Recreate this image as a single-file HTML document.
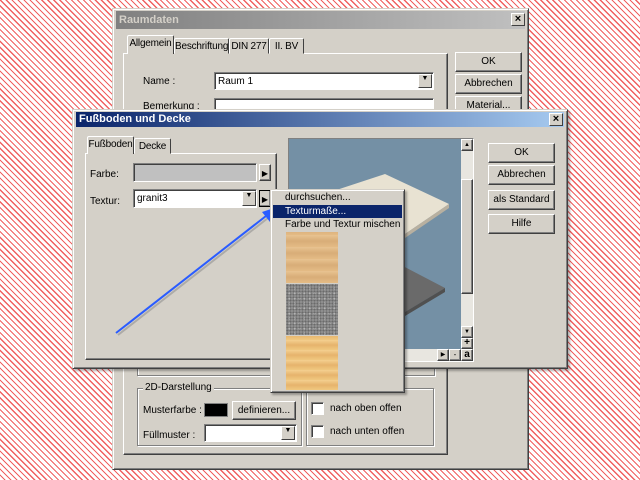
<!DOCTYPE html>
<html><head><meta charset="utf-8"><style>
*{box-sizing:border-box;margin:0;padding:0}
body{width:640px;height:480px;overflow:hidden;position:relative;font-family:"Liberation Sans",sans-serif;font-size:10px;color:#000;white-space:nowrap;
background:repeating-linear-gradient(45deg,#fff 0,#fff 3px,#f06060 3px,#f06060 4.2px);}
.abs{position:absolute}
.win{position:absolute;background:#d4d0c8;border:1px solid;border-color:#d4d0c8 #404040 #404040 #d4d0c8;box-shadow:inset 1px 1px #fff,inset -1px -1px #808080}
.btn{position:absolute;background:#d4d0c8;border:1px solid;border-color:#fff #404040 #404040 #fff;box-shadow:inset -1px -1px #808080;text-align:center;line-height:17px}
.sunk{position:absolute;background:#fff;border:1px solid;border-color:#808080 #fff #fff #808080;box-shadow:inset 1px 1px #404040}
.panel{position:absolute;border:1px solid;border-color:#fff #404040 #404040 #fff;box-shadow:inset -1px -1px #808080}
.tab{position:absolute;background:#d4d0c8;border:1px solid;border-color:#fff #404040 transparent #fff;border-radius:2px 2px 0 0;text-align:center;line-height:15px;letter-spacing:-0.2px}
.grp{position:absolute;border:1px solid #808080;box-shadow:1px 1px #fff,inset 1px 1px #fff}
.x{position:absolute;width:14px;height:13px;background:#d4d0c8;border:1px solid;border-color:#fff #404040 #404040 #fff;font-size:11px;line-height:10px;text-align:center;font-weight:bold}
.dd{position:absolute;width:14px;background:#d4d0c8;border:1px solid;border-color:#fff #404040 #404040 #fff;font-size:7px;text-align:center}
.cb{position:absolute;width:13px;height:13px;background:#fff;border:1px solid;border-color:#808080 #fff #fff #808080;box-shadow:inset 1px 1px #404040}
</style></head><body>

<div class="win" style="left:112px;top:8px;width:417px;height:462px">
 <div class="abs" style="left:3px;top:2px;width:409px;height:18px;background:linear-gradient(90deg,#808080,#c0c0c0);color:#d4d0c8;font-weight:bold;font-size:11px;padding:3px 3px;">Raumdaten</div>
 <div class="x" style="left:398px;top:4px">×</div>
 <div class="panel" style="left:10px;top:44px;width:325px;height:402px"></div>
 <div class="tab" style="left:14px;top:26px;width:47px;height:19px;border-bottom:none;z-index:2">Allgemein</div>
 <div class="tab" style="left:61px;top:29px;width:55px;height:16px">Beschriftung</div>
 <div class="tab" style="left:116px;top:29px;width:40px;height:16px">DIN 277</div>
 <div class="tab" style="left:156px;top:29px;width:35px;height:16px">II. BV</div>
 <div class="abs" style="left:30px;top:67px">Name :</div>
 <div class="sunk" style="left:101px;top:63px;width:220px;height:18px;padding:3px 3px">Raum 1</div>
 <div class="dd" style="left:305px;top:65px;height:14px">▼</div>
 <div class="abs" style="left:30px;top:92px">Bemerkung :</div>
 <div class="sunk" style="left:101px;top:89px;width:220px;height:18px"></div>
 <div class="btn" style="left:342px;top:43px;width:67px;height:20px">OK</div>
 <div class="btn" style="left:342px;top:65px;width:67px;height:20px">Abbrechen</div>
 <div class="btn" style="left:342px;top:87px;width:67px;height:20px">Material...</div>
 <div class="grp" style="left:24px;top:330px;width:298px;height:37px"></div>
 <div class="grp" style="left:24px;top:379px;width:165px;height:58px"></div>
 <div class="abs" style="left:30px;top:373px;background:#d4d0c8;padding:0 2px">2D-Darstellung</div>
 <div class="grp" style="left:193px;top:379px;width:128px;height:58px"></div>
 <div class="abs" style="left:30px;top:396px">Musterfarbe :</div>
 <div class="abs" style="left:91px;top:394px;width:24px;height:14px;background:#000;border:1px solid #808080"></div>
 <div class="btn" style="left:119px;top:392px;width:64px;height:19px">definieren...</div>
 <div class="abs" style="left:30px;top:421px">Füllmuster :</div>
 <div class="sunk" style="left:91px;top:415px;width:93px;height:18px"></div>
 <div class="dd" style="left:168px;top:417px;height:14px">▼</div>
 <div class="cb" style="left:198px;top:393px"></div>
 <div class="abs" style="left:217px;top:394px">nach oben offen</div>
 <div class="cb" style="left:198px;top:416px"></div>
 <div class="abs" style="left:217px;top:417px">nach unten offen</div>
</div>

<div class="win" style="left:72px;top:109px;width:496px;height:260px;box-shadow:inset 1px 1px #fff,inset -1px -1px #808080,2px 2px 2px rgba(0,0,0,.3)">
 <div class="abs" style="left:3px;top:2px;width:488px;height:15px;background:linear-gradient(90deg,#0a246a,#a6caf0);color:#fff;font-weight:bold;font-size:11px;padding:1px 3px;">Fußboden und Decke</div>
 <div class="x" style="left:476px;top:3px">×</div>
 <div class="panel" style="left:12px;top:43px;width:192px;height:207px"></div>
 <div class="tab" style="left:14px;top:26px;width:47px;height:18px;border-bottom:none;z-index:2">Fußboden</div>
 <div class="tab" style="left:61px;top:28px;width:37px;height:16px">Decke</div>
 <div class="abs" style="left:17px;top:59px">Farbe:</div>
 <div class="abs" style="left:60px;top:53px;width:124px;height:19px;background:#c0c0c0;border:1px solid;border-color:#808080 #fff #fff #808080;box-shadow:inset 1px 1px #404040"></div>
 <div class="btn" style="left:186px;top:54px;width:12px;height:17px;font-size:8px">▶</div>
 <div class="abs" style="left:17px;top:86px">Textur:</div>
 <div class="sunk" style="left:60px;top:79px;width:124px;height:19px;padding:3px 3px">granit3</div>
 <div class="dd" style="left:169px;top:81px;height:15px">▼</div>
 <div class="btn" style="left:186px;top:80px;width:12px;height:17px;font-size:8px;border-color:#000;">▶</div>
 <div class="abs" style="left:215px;top:28px;width:186px;height:224px;background:#7490a5;border:1px solid;border-color:#808080 #fff #fff #808080;overflow:hidden">
  <svg width="186" height="224" class="abs" style="left:0;top:0">
   <polygon points="96,35 160,65 116,95 20,60" fill="#e8e2d2"/>
   <polygon points="116,95 160,65 160,69 116,99" fill="#b8b0a0"/>
   <polygon points="110,125 156,149 116,173 60,145" fill="#6a6a6a"/>
   <polygon points="116,173 156,149 156,153 116,177" fill="#505050"/>
  </svg>
  <div class="abs" style="left:172px;top:0;width:12px;height:222px;background:#e8e6e0"></div>
  <div class="btn" style="left:172px;top:0;width:12px;height:12px;font-size:6px;line-height:10px">▲</div>
  <div class="btn" style="left:172px;top:40px;width:12px;height:115px"></div>
  <div class="btn" style="left:172px;top:187px;width:12px;height:12px;font-size:6px;line-height:10px">▼</div>
  <div class="btn" style="left:172px;top:199px;width:12px;height:11px;font-size:10px;line-height:8px;font-weight:bold">+</div>
  <div class="btn" style="left:172px;top:210px;width:12px;height:12px;font-size:10px;line-height:9px;font-weight:bold">a</div>
  <div class="abs" style="left:0;top:210px;width:172px;height:12px;background:#e8e6e0"></div>
  <div class="btn" style="left:148px;top:210px;width:12px;height:12px;font-size:6px;line-height:10px">▶</div>
  <div class="btn" style="left:160px;top:210px;width:12px;height:12px;font-size:8px;line-height:9px">-</div>
 </div>
 <div class="btn" style="left:415px;top:33px;width:67px;height:20px">OK</div>
 <div class="btn" style="left:415px;top:55px;width:67px;height:20px">Abbrechen</div>
 <div class="btn" style="left:415px;top:80px;width:67px;height:20px">als Standard</div>
 <div class="btn" style="left:415px;top:104px;width:67px;height:20px">Hilfe</div>
</div>

<svg class="abs" style="left:0;top:0" width="640" height="480">
 <line x1="118" y1="335" x2="268" y2="218" stroke="#888" stroke-width="2" opacity=".5"/>
 <line x1="116" y1="333" x2="266" y2="216" stroke="#2a5cff" stroke-width="2"/>
 <polygon points="280,206 262,212 270,222" fill="#2a5cff"/>
</svg>

<div class="abs" style="left:270px;top:189px;width:135px;height:204px;background:#d4d0c8;border:1px solid;border-color:#d4d0c8 #404040 #404040 #d4d0c8;box-shadow:inset 1px 1px #fff,inset -1px -1px #808080,2px 2px 2px rgba(0,0,0,.3)">
 <div class="abs" style="left:14px;top:2px">durchsuchen...</div>
 <div class="abs" style="left:2px;top:15px;width:129px;height:13px;background:#0a246a;color:#fff;padding-left:12px;line-height:13px">Texturmaße...</div>
 <div class="abs" style="left:14px;top:29px">Farbe und Textur mischen</div>
 <div class="abs" style="left:15px;top:42px;width:52px;height:51px;background:repeating-linear-gradient(0deg,#e4bb85 0,#d8ad78 6px,#e8c391 12px)"></div>
 <div class="abs" style="left:15px;top:94px;width:52px;height:51px;background:#8e8e8e;background-image:radial-gradient(#6a6a6a 0.8px,transparent 1px),radial-gradient(#b4b4b4 0.8px,transparent 1px);background-size:3px 3px,5px 5px;background-position:0 0,1px 2px"></div>
 <div class="abs" style="left:15px;top:146px;width:52px;height:54px;background:repeating-linear-gradient(0deg,#f0c880 0,#e6b36c 5px,#f4d090 10px)"></div>
</div>
</body></html>
